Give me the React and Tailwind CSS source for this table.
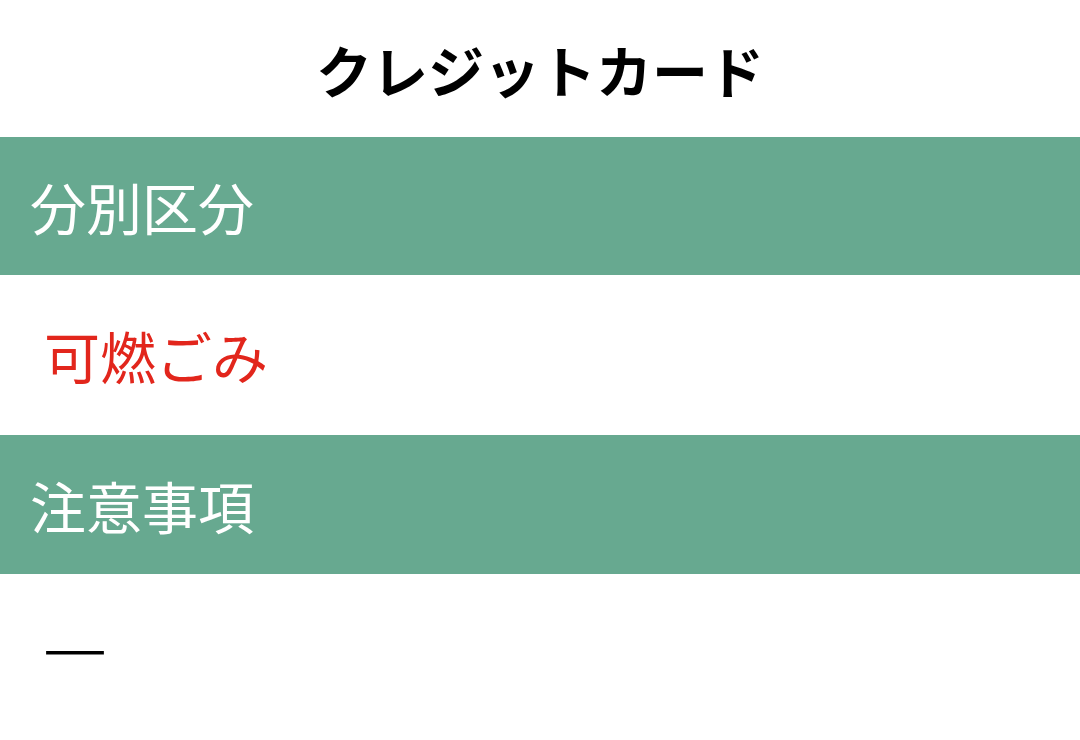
export default function App() {
  const font = { fontFamily: '"Noto Sans CJK JP", "Noto Sans", sans-serif' };
  return (
    <div className="w-[1080px] h-[740px] bg-white overflow-hidden" style={font}>
      <div className="h-[137px] flex items-center justify-center">
        <h1 className="text-[56px] font-bold text-black leading-none">クレジットカード</h1>
      </div>
      <div className="h-[138px] bg-[#67a990] flex items-center pl-[30px]">
        <span className="text-[56px] text-white leading-none">分別区分</span>
      </div>
      <div className="h-[160px] flex items-center pl-[44px]">
        <span className="text-[56px] text-[#e2261c] leading-none">可燃ごみ</span>
      </div>
      <div className="h-[139px] bg-[#67a990] flex items-center pl-[30px]">
        <span className="text-[56px] text-white leading-none">注意事項</span>
      </div>
      <div className="h-[166px] flex items-start pt-[42px] pl-[41px]">
        <span lang="ja" className="text-[68px] font-black text-black leading-none">―</span>
      </div>
    </div>
  );
}
